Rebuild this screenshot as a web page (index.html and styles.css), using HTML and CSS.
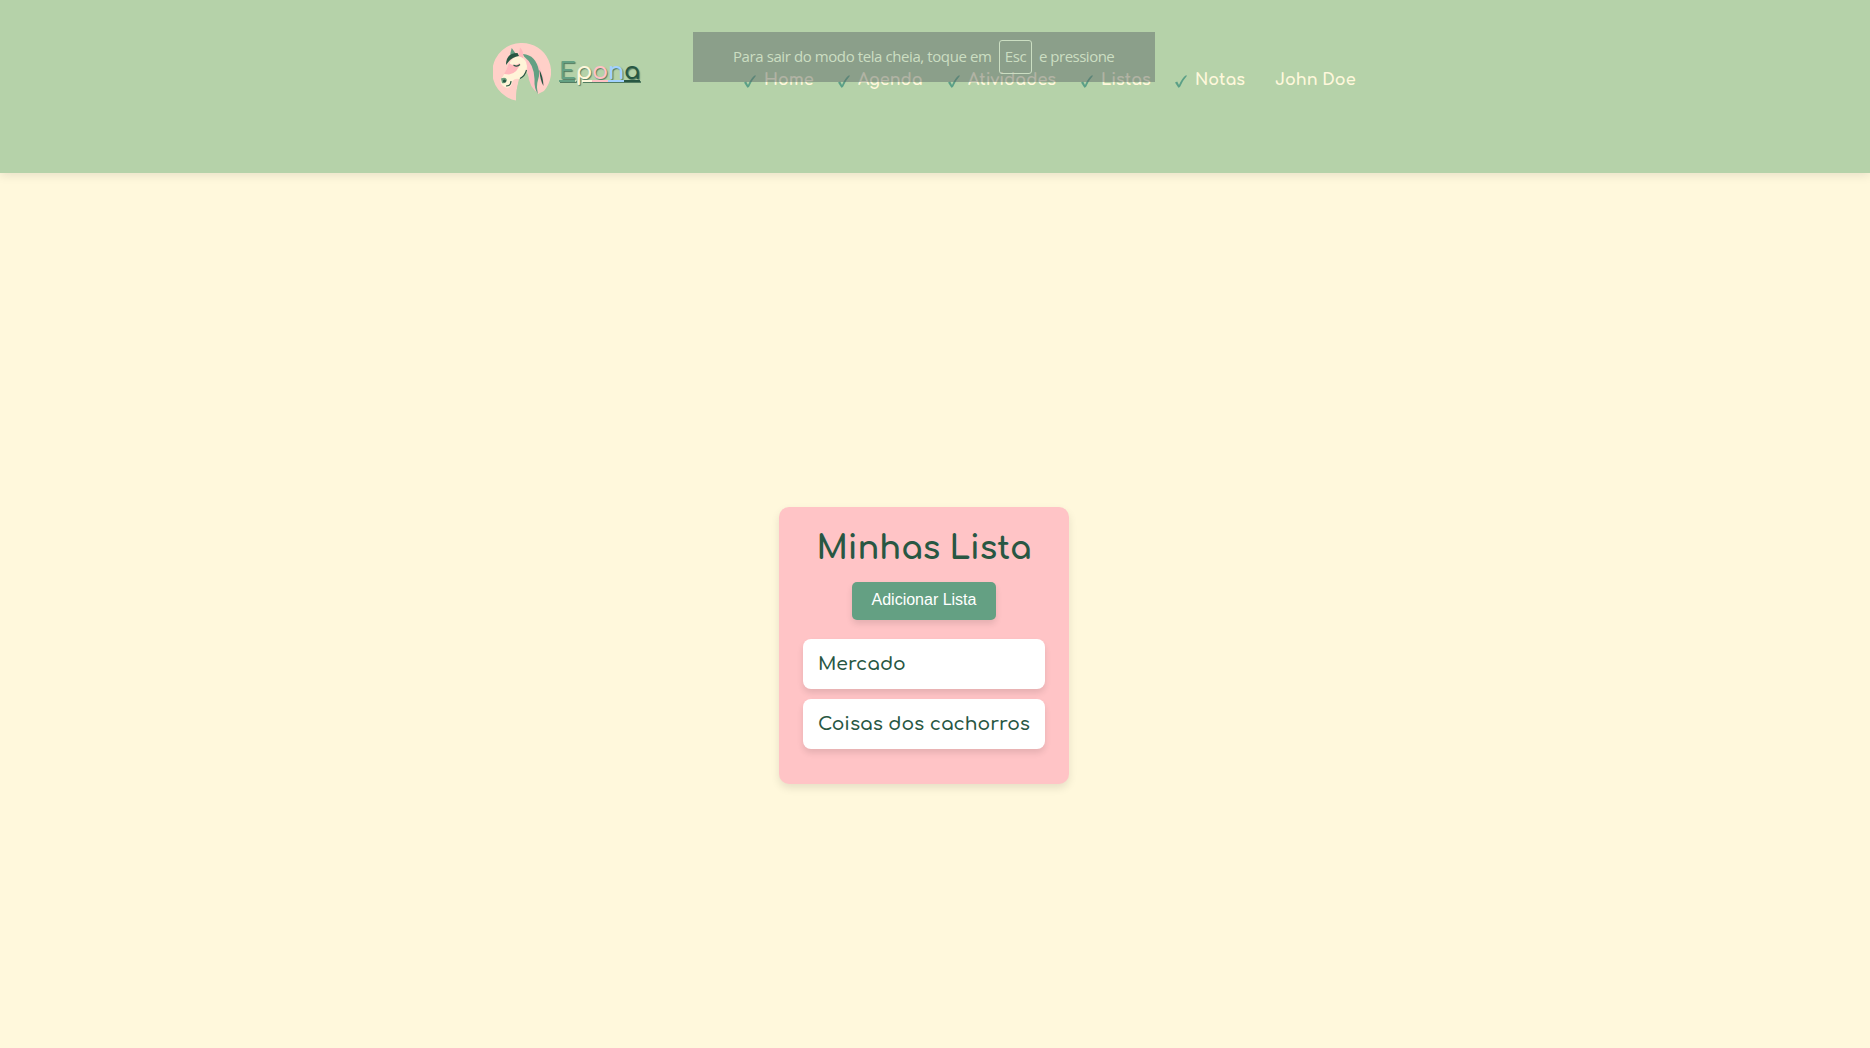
FILE: index.html
```html
<!DOCTYPE html>
<html lang="pt-BR">
<head>
<meta charset="utf-8">
<title>Epona</title>
<link rel="stylesheet" href="styles.css">
</head>
<body>
<header class="header">
  <a class="brand">
    <svg class="logo" viewBox="0 0 58 58">
      <path fill="#ffd0c8" d="M29 0a29 29 0 0 1 22 48L45 51L34 30L26 36Q23 47 23 57.500A29 29 0 0 1 29 0Z"/>
      <path fill="#b5d2a9" d="M34 27C34 40 38 49 46 53Q36 60 23 57.500Q23 46 26 38Q33 35 34 27Z"/>
      <path fill="#64a083" d="M18.700 5L23 11L17 15Q17 10 18.700 5Z"/>
      <path fill="#ffb9bd" d="M27 4.500Q31 8 30 15L25.500 14Z"/>
      <path fill="#fff4d8" d="M24 13Q33 14 34 23Q34 32 26 36Q22 35 19.500 38Q19 44 14 45Q7 43 7.500 37Q12 31 16 21Q19 15 24 13Z"/>
      <path fill="#ffb9bd" d="M16 20Q20 24 27 20Q25 30 16 31.500L11 31Q14 26 16 20Z"/>
      <path fill="#285743" d="M13 22Q13 10 24.500 10L26 13Q18 14 13 22Z"/>
      <path fill="#ffc2c5" d="M33 15Q41 22 41 34Q42 43 46 51Q36 45 35 30ZM44 20Q52 32 51 43Q46 38 44 29Z"/>
      <path fill="#64a083" d="M30 11Q43 12 46 28Q46.500 33 45 37Q43 43 45 51Q41 46 41.500 36Q41 21 31 13.500Z"/>
      <path fill="#285743" d="M46.500 27Q50 33 50.500 43Q47 37 46.500 27Z"/>
      <path fill="none" stroke="#285743" stroke-width="1.100" d="M20.500 22Q24 24.500 27 21.500M33.500 27Q32 33 27 35.500M13 43Q18 43 18 38"/>
      <path fill="#6b9d7c" d="M8 35.500Q13 33.500 14 37Q12.500 41 9 40Z"/>
      <circle cx="11.500" cy="38" r="1.600" fill="#285743"/>
    </svg>
    <span class="wordmark"><span class="e">E</span><span class="p">p</span><span class="o">o</span><span class="n">n</span><span class="a">a</span></span>
  </a>
  <nav class="nav">
    <a class="link home"><svg class="check" viewBox="0 0 12 13"><path d="M0 7.500L2.200 6.500L4 10Q7 3 11 .3L12 .7Q8 5 5 12L3.400 12.700Z"/></svg><span>Home</span></a>
    <a class="link agenda"><svg class="check" viewBox="0 0 12 13"><path d="M0 7.500L2.200 6.500L4 10Q7 3 11 .3L12 .7Q8 5 5 12L3.400 12.700Z"/></svg><span>Agenda</span></a>
    <a class="link atividades"><svg class="check" viewBox="0 0 12 13"><path d="M0 7.500L2.200 6.500L4 10Q7 3 11 .3L12 .7Q8 5 5 12L3.400 12.700Z"/></svg><span>Atividades</span></a>
    <a class="link listas"><svg class="check" viewBox="0 0 12 13"><path d="M0 7.500L2.200 6.500L4 10Q7 3 11 .3L12 .7Q8 5 5 12L3.400 12.700Z"/></svg><span>Listas</span></a>
    <a class="link notas"><svg class="check" viewBox="0 0 12 13"><path d="M0 7.500L2.200 6.500L4 10Q7 3 11 .3L12 .7Q8 5 5 12L3.400 12.700Z"/></svg><span>Notas</span></a>
    <a class="user">John Doe</a>
  </nav>
</header>
<div class="toast"><span class="toast-text">Para sair do modo tela cheia, toque em</span><kbd class="key">Esc</kbd><span class="toast-end">e pressione</span></div>
<main class="main">
  <section class="card">
    <h1 class="title">Minhas Lista</h1>
    <button class="add">Adicionar Lista</button>
    <ul class="lists">
      <li class="item">Mercado</li>
      <li class="item">Coisas dos cachorros</li>
    </ul>
  </section>
</main>
</body>
</html>
```
FILE: styles.css
```css
* { box-sizing: border-box; }
body {
  margin: 0;
  height: 1048px;
  overflow: hidden;
  display: flex;
  flex-direction: column;
  background: #fff8dc;
  color: #285743;
  font-family: Comfortaa, Inter, sans-serif;
  font-feature-settings: "cv11";
}
.header {
  height: 173px;
  flex: none;
  display: flex;
  align-items: flex-start;
  padding-left: 493px;
  background: #b5d2a9;
  box-shadow: 0 2px 10px rgba(0, 0, 0, .1);
}
.brand { display: flex; width: 251px; padding-top: 43px; }
.logo { width: 58px; height: 58px; flex: none; }
.wordmark {
  margin: 11px 0 0 8px;
  font-size: 24px;
  line-height: 36px;
  font-weight: 600;
  letter-spacing: -.3px;
  white-space: nowrap;
  text-shadow: 1px 1px 1px rgba(40, 87, 67, .7);
}
.wordmark span { text-decoration: underline 2px; }
.e { color: #64a083; }
.p { color: #fff8dc; }
.o { color: #ffc2c5; }
.n { color: #a2d2ff; }
.a { color: #285743; }
.nav {
  display: flex;
  padding-top: 70px;
  font-size: 16px;
  line-height: 20px;
  font-weight: 700;
  color: #fff8dc;
  white-space: nowrap;
}
.link { display: flex; gap: 8px; }
.check { width: 12px; height: 13px; margin-top: 5px; fill: #5ba087; }
.home { width: 94px; }
.agenda { width: 110px; }
.atividades { width: 133px; }
.listas { width: 94px; }
.notas { width: 100px; }
.toast {
  position: absolute;
  left: 693px;
  top: 32px;
  width: 462px;
  height: 50px;
  display: flex;
  align-items: center;
  padding-left: 40px;
  background: rgba(95, 105, 105, .48);
  color: #cbdec2;
  font: 15px "Open Sans", sans-serif;
  white-space: nowrap;
}
.toast-text { width: 266px; letter-spacing: -.41px; padding-bottom: 2px; }
.key {
  width: 33px;
  height: 34px;
  border: 1px solid;
  border-radius: 3px;
  font: inherit;
  line-height: 30px;
  text-align: center;
  letter-spacing: -.4px;
}
.toast-end { margin-left: 7px; letter-spacing: -.5px; padding-bottom: 2px; }
.main { flex: 1; padding: 333.6px 0 0 779px; }
.card {
  width: 290px;
  height: 277px;
  padding: 22px 24px 19px;
  display: flex;
  flex-direction: column;
  align-items: center;
  border-radius: 10px;
  background: #ffc4c6;
  box-shadow: 0 4px 8px rgba(0, 0, 0, .1);
}
.title { margin: 0; font-size: 32px; line-height: 40px; font-weight: 700; white-space: nowrap; }
.add {
  width: 144px;
  height: 38px;
  margin: 13px 0 19.8px;
  padding: 0 0 1px;
  border: 0;
  border-radius: 5px;
  background: #64a083;
  color: #fff;
  font: 16px "Liberation Sans", sans-serif;
  box-shadow: 0 4px 6px rgba(0, 0, 0, .1);
}
.lists { width: 242px; margin: 0; padding: 0; display: grid; gap: 10px; list-style: none; }
.item {
  height: 50px;
  padding-left: 15px;
  border-radius: 8px;
  background: #fff;
  box-shadow: 0 4px 6px rgba(0, 0, 0, .1);
  font-size: 18.72px;
  line-height: 50px;
  font-weight: 600;
  white-space: nowrap;
}
```
